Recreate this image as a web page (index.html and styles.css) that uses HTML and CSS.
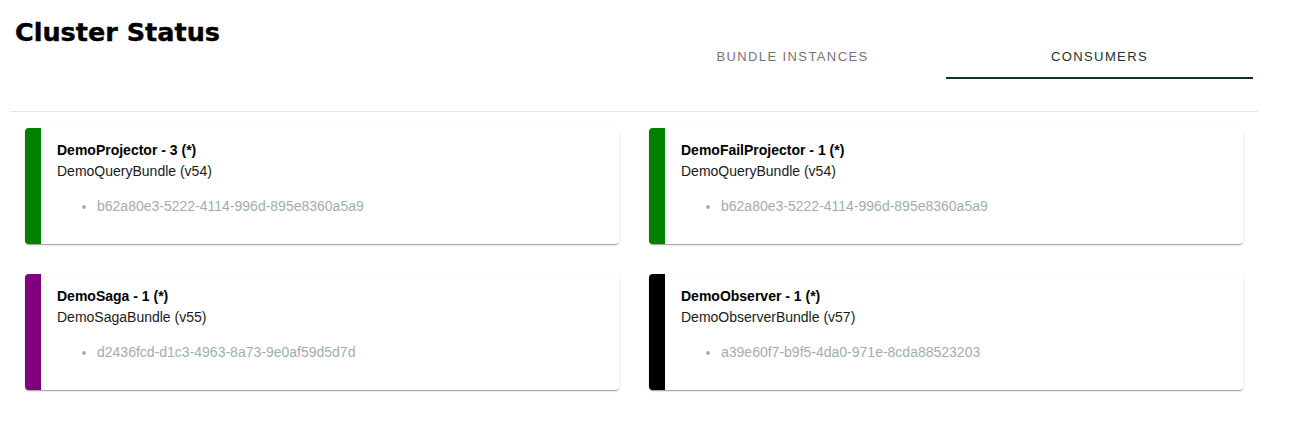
FILE: index.html
```html
<!DOCTYPE html>
<html lang="en">
<head>
<meta charset="utf-8">
<title>Cluster Status</title>
<link rel="stylesheet" href="styles.css">
</head>
<body>
<div class="page">
  <header class="header">
    <div class="header-left">
      <h1 class="title">Cluster Status</h1>
    </div>
    <div class="header-right">
      <nav class="tabs">
        <div class="tab">BUNDLE INSTANCES</div>
        <div class="tab tab-active">CONSUMERS</div>
      </nav>
    </div>
  </header>
  <main class="grid">
    <section class="card card-green">
      <div class="card-name">DemoProjector - 3 (*)</div>
      <div class="card-bundle">DemoQueryBundle (v54)</div>
      <ul class="card-list"><li>b62a80e3-5222-4114-996d-895e8360a5a9</li></ul>
    </section>
    <section class="card card-green">
      <div class="card-name">DemoFailProjector - 1 (*)</div>
      <div class="card-bundle">DemoQueryBundle (v54)</div>
      <ul class="card-list"><li>b62a80e3-5222-4114-996d-895e8360a5a9</li></ul>
    </section>
    <section class="card card-purple">
      <div class="card-name">DemoSaga - 1 (*)</div>
      <div class="card-bundle">DemoSagaBundle (v55)</div>
      <ul class="card-list"><li>d2436fcd-d1c3-4963-8a73-9e0af59d5d7d</li></ul>
    </section>
    <section class="card card-black">
      <div class="card-name">DemoObserver - 1 (*)</div>
      <div class="card-bundle">DemoObserverBundle (v57)</div>
      <ul class="card-list"><li>a39e60f7-b9f5-4da0-971e-8cda88523203</li></ul>
    </section>
  </main>
</div>
</body>
</html>
```

FILE: styles.css
```css
* { box-sizing: border-box; }
html, body { margin: 0; padding: 0; background: #fff; }
body { font-family: "Liberation Sans", Arial, sans-serif; color: #000; }

.page { width: 1248px; margin: 0 10px; }

.header {
  display: grid;
  grid-template-columns: 1fr 1fr;
  height: 112px;
  border-bottom: 1px solid #e6e6e6;
}
.header-left, .header-right { padding: 5px; }

.title {
  margin: 12px 0 0 0;
  font-family: "DejaVu Sans", sans-serif;
  font-weight: 700;
  font-size: 25.5px;
  line-height: 30px;
  color: #000;
  -webkit-text-stroke: 0.4px #000;
}

.tabs {
  display: flex;
  margin-top: 26px;
}
.tab {
  width: 307px;
  height: 48px;
  display: flex;
  align-items: center;
  justify-content: center;
  font-size: 13px;
  letter-spacing: 1.4px;
  color: #767676;
  border-bottom: 2px solid transparent;
  padding-top: 4px;
}
.tab-active {
  color: #1c3232;
  border-bottom-color: #10302e;
}

.grid {
  display: grid;
  grid-template-columns: 1fr 1fr;
  padding-top: 1px;
}

.card {
  margin: 15px;
  background: #fff;
  border-radius: 4px;
  border-left: 16px solid #008000;
  padding: 12px 16px 13px;
  font-size: 14px;
  line-height: 21px;
  box-shadow: 0 2px 1px -1px rgba(0,0,0,0.2), 0 1px 1px 0 rgba(0,0,0,0.14), 0 1px 3px 0 rgba(0,0,0,0.12);
}
.card-green { border-left-color: #008000; }
.card-purple { border-left-color: #800080; }
.card-black { border-left-color: #000000; }

.card-name { font-weight: 700; color: #000; }
.card-bundle { color: #1a1a1a; }

.card-list {
  margin: 14px 0;
  padding-left: 40px;
  color: #9eafaf;
}
```
